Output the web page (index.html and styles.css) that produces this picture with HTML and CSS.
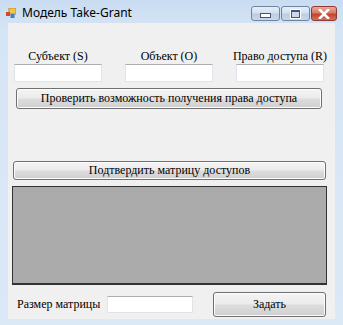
FILE: index.html
```html
<!DOCTYPE html>
<html lang="ru">
<head>
    <meta charset="UTF-8">
    <meta name="viewport" content="width=device-width, initial-scale=1.0">
    <title>Модель Take-Grant</title>
    <link rel="stylesheet" href="styles.css">
</head>
<body>

    <div class="window">
        <div class="titlebar">
            <svg class="app-icon" width="10" height="10" viewBox="0 0 10 10">
                <rect x="3" y="0" width="7" height="6" fill="#f3c34a" stroke="#c98a1c" stroke-width="1"/>
                <rect x="0" y="4" width="4" height="4" fill="#d9442b"/>
                <rect x="4.5" y="6" width="4" height="4" fill="#3f7fd0"/>
            </svg>
            <span class="title">Модель Take-Grant</span>
            <div class="controls">
                <div class="ctl ctl-min"><span class="min-bar"></span></div>
                <div class="ctl ctl-max"><span class="max-box"></span></div>
                <div class="ctl ctl-close">
                    <svg width="12" height="10" viewBox="0 0 12 10">
                        <path d="M2 1 L10 9 M10 1 L2 9" stroke="#ffffff" stroke-width="2.6" stroke-linecap="square"/>
                    </svg>
                </div>
            </div>
        </div>

        <div class="client">
            <div class="fields">
                <div class="field">
                    <label>Субъект (S)</label>
                    <input type="text" class="textbox">
                </div>
                <div class="field">
                    <label>Объект (O)</label>
                    <input type="text" class="textbox">
                </div>
                <div class="field">
                    <label>Право доступа (R)</label>
                    <input type="text" class="textbox">
                </div>
            </div>

            <button class="btn btn-check">Проверить возможность получения права доступа</button>

            <button class="btn btn-confirm">Подтвердить матрицу доступов</button>

            <div class="matrix"></div>

            <div class="size-row">
                <span class="size-label">Размер матрицы</span>
                <input type="text" class="textbox size-box">
                <button class="btn btn-set">Задать</button>
            </div>
        </div>
    </div>

</body>
</html>
```

FILE: styles.css
```css
body {
    margin: 0;
    font-family: "Liberation Serif", serif;
    font-size: 12px;
    background: #ffffff;
}

.window {
    width: 343px;
    height: 325px;
    display: flex;
    flex-direction: column;
    background: linear-gradient(to bottom, #c9dcf1 0px, #d6e5f5 30px, #dbe8f6 100%);
    box-sizing: border-box;
}

/* Title bar */
.titlebar {
    height: 23px;
    display: flex;
    align-items: center;
    position: relative;
}

.app-icon {
    margin-left: 6px;
    margin-top: 2px;
}

.title {
    margin-left: 6px;
    margin-top: 1px;
    font-family: "Noto Sans", sans-serif;
    font-size: 12px;
    color: #000;
}

.controls {
    margin-left: auto;
    margin-right: 6px;
    margin-top: 4px;
    display: flex;
    gap: 1px;
}

.ctl {
    height: 15px;
    border: 1px solid #6f84a3;
    border-radius: 3px;
    box-sizing: border-box;
    display: flex;
    align-items: center;
    justify-content: center;
    background: linear-gradient(to bottom, #e6eef8 0%, #d3e0ef 45%, #bccde3 55%, #c9d9ec 100%);
}

.ctl-min { width: 29px; }
.ctl-max { width: 29px; }

.ctl-close {
    width: 26px;
    border-color: #8e3a32;
    background: linear-gradient(to bottom, #e9a99c 0%, #d97a68 45%, #c5432e 55%, #d3705a 100%);
}

.min-bar {
    width: 9px;
    height: 3px;
    margin-top: 4px;
    background: #fff;
    border: 1px solid #45566e;
}

.max-box {
    width: 7px;
    height: 5px;
    border: 1px solid #45566e;
    border-top-width: 2px;
    background: #c9d8ea;
    box-shadow: 0 0 0 1px #fff;
}

/* Client area */
.client {
    flex: 1;
    margin: 0 8px 6px 8px;
    background: #f0f0f0;
    display: flex;
    flex-direction: column;
    align-items: flex-start;
}

.fields {
    margin: 26px 0 0 6px;
    display: grid;
    grid-template-columns: 88px 88px 88px;
    column-gap: 23px;
}

.field {
    display: flex;
    flex-direction: column;
    align-items: center;
}

.field label {
    line-height: 15px;
    white-space: nowrap;
    color: #000;
}

.textbox {
    width: 88px;
    height: 18px;
    margin: 0;
    padding: 0;
    box-sizing: border-box;
    background: #fff;
    border: 1px solid #e2e3ea;
    border-top-color: #abadb3;
    border-radius: 0;
}

.btn {
    margin: 0;
    padding: 0;
    box-sizing: border-box;
    font-family: "Liberation Serif", serif;
    font-size: 12px;
    color: #000;
    border: 1px solid #707070;
    border-radius: 3px;
    background: linear-gradient(to bottom, #f4f4f4 0%, #ebebeb 48%, #dddddd 52%, #cfcfcf 100%);
    box-shadow: inset 0 0 0 1px #fcfcfc;
}

.btn-check {
    margin: 6px 0 0 8px;
    width: 306px;
    height: 21px;
}

.btn-confirm {
    margin: 52px 0 0 5px;
    width: 313px;
    height: 19px;
}

.matrix {
    margin: 6px 0 0 4px;
    width: 315px;
    height: 99px;
    box-sizing: border-box;
    background: #ababab;
    border: 1px solid #333;
    border-bottom-width: 2px;
}

.size-row {
    margin: 7px 0 0 0;
    height: 25px;
    display: flex;
    align-items: center;
}

.size-label {
    margin-left: 9px;
    width: 90px;
    white-space: nowrap;
}

.size-box {
    width: 86px;
    height: 17px;
}

.btn-set {
    margin-left: 20px;
    width: 113px;
    height: 25px;
}
```
